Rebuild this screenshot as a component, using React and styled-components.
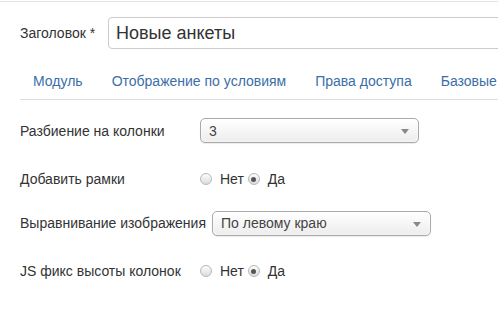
import React from 'react';
import styled, { createGlobalStyle } from 'styled-components';

const GlobalStyle = createGlobalStyle`
  html, body {
    margin: 0;
    padding: 0;
    background: #fff;
  }

  body {
    font-family: "Liberation Sans", Arial, sans-serif;
    font-size: 14px;
    color: #333;
    overflow: hidden;
  }
`;

const Page = styled.div`
  width: 498px;
  height: 321px;
  overflow: hidden;
  border-top: 1px solid #fff;
`;

const TopRule = styled.div`
  height: 1px;
  background: #e4e4e4;
`;

const Content = styled.div`
  padding: 15px 0 0 20px;
`;

const TitleRow = styled.div`
  display: flex;
  align-items: center;
  height: 32px;
`;

const TitleLabel = styled.label`
  flex: none;
  width: 88px;
  font-size: 14px;
  white-space: nowrap;
`;

const TitleInput = styled.input`
  flex: none;
  width: 420px;
  height: 32px;
  box-sizing: border-box;
  border: 1px solid #ccc;
  border-radius: 4px;
  padding: 0 7px;
  font-family: "Liberation Sans", Arial, sans-serif;
  font-size: 18px;
  color: #333;
  outline: none;
`;

const Tabs = styled.ul`
  display: flex;
  list-style: none;
  margin: 14px 0 0;
  padding: 0;
  height: 36px;
  border-bottom: 1px solid #ddd;
  white-space: nowrap;
`;

const Tab = styled.li`
  display: flex;
  align-items: center;
  padding: 0 13px;
  margin-right: 3px;
  color: #3b6ea8;
  font-size: 14px;
`;

const Form = styled.div`
  padding-top: 18px;
`;

const Row = styled.div`
  display: flex;
  align-items: center;
  height: ${(p) => p.$h}px;
  margin-bottom: ${(p) => p.$mb}px;
`;

const Label = styled.div`
  min-width: 174px;
  margin-right: 6px;
  white-space: nowrap;
`;

const Select = styled.div`
  position: relative;
  width: 219px;
  height: 25px;
  box-sizing: border-box;
  border: 1px solid #aaa;
  border-radius: 5px;
  background: linear-gradient(#ffffff 0%, #f7f7f7 45%, #ececec 100%);
  box-shadow: inset 0 0 3px #fff, 0 1px 1px rgba(0, 0, 0, 0.08);
  padding: 0 28px 0 8px;
  display: flex;
  align-items: center;
  color: #444;
  font-size: 14px;

  &::after {
    content: '';
    position: absolute;
    right: 9px;
    top: 10px;
    border-left: 4px solid transparent;
    border-right: 4px solid transparent;
    border-top: 5px solid #888;
  }
`;

const Radios = styled.div`
  display: flex;
  align-items: center;
`;

const Radio = styled.span`
  position: relative;
  width: 12px;
  height: 12px;
  box-sizing: border-box;
  border-radius: 50%;
  border: 1px solid #b8b8b8;
  background: linear-gradient(#fdfdfd, #dcdcdc);
  margin-right: 8px;

  &::after {
    content: '';
    display: ${(p) => (p.$checked ? 'block' : 'none')};
    position: absolute;
    left: 2.5px;
    top: 2.5px;
    width: 5px;
    height: 5px;
    border-radius: 50%;
    background: #555;
  }
`;

const RadioText = styled.span`
  margin-right: 4px;
`;

function YesNo() {
  return (
    <Radios>
      <Radio />
      <RadioText>Нет</RadioText>
      <Radio $checked />
      <RadioText>Да</RadioText>
    </Radios>
  );
}

export default function App() {
  return (
    <Page>
      <GlobalStyle />
      <TopRule />
      <Content>
        <TitleRow>
          <TitleLabel>Заголовок *</TitleLabel>
          <TitleInput defaultValue="Новые анкеты" />
        </TitleRow>

        <Tabs>
          <Tab>Модуль</Tab>
          <Tab>Отображение по условиям</Tab>
          <Tab>Права доступа</Tab>
          <Tab>Базовые</Tab>
        </Tabs>

        <Form>
          <Row $h={25} $mb={24}>
            <Label>Разбиение на колонки</Label>
            <Select>3</Select>
          </Row>
          <Row $h={24} $mb={20}>
            <Label>Добавить рамки</Label>
            <YesNo />
          </Row>
          <Row $h={24} $mb={24}>
            <Label>Выравнивание изображения</Label>
            <Select>По левому краю</Select>
          </Row>
          <Row $h={24} $mb={0}>
            <Label>JS фикс высоты колонок</Label>
            <YesNo />
          </Row>
        </Form>
      </Content>
    </Page>
  );
}
